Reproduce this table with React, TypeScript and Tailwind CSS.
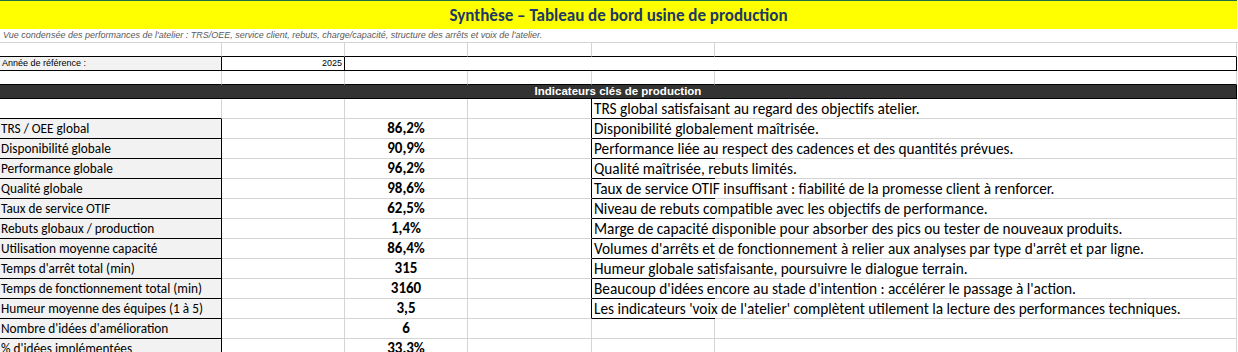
const rows = [
  { label: '', value: '', note: 'TRS global satisfaisant au regard des objectifs atelier.' },
  { label: 'TRS / OEE global', value: '86,2%', note: 'Disponibilité globalement maîtrisée.' },
  { label: 'Disponibilité globale', value: '90,9%', note: 'Performance liée au respect des cadences et des quantités prévues.' },
  { label: 'Performance globale', value: '96,2%', note: 'Qualité maîtrisée, rebuts limités.' },
  { label: 'Qualité globale', value: '98,6%', note: 'Taux de service OTIF insuffisant : fiabilité de la promesse client à renforcer.' },
  { label: 'Taux de service OTIF', value: '62,5%', note: 'Niveau de rebuts compatible avec les objectifs de performance.' },
  { label: 'Rebuts globaux / production', value: '1,4%', note: 'Marge de capacité disponible pour absorber des pics ou tester de nouveaux produits.' },
  { label: 'Utilisation moyenne capacité', value: '86,4%', note: "Volumes d'arrêts et de fonctionnement à relier aux analyses par type d'arrêt et par ligne." },
  { label: "Temps d'arrêt total (min)", value: '315', note: 'Humeur globale satisfaisante, poursuivre le dialogue terrain.' },
  { label: 'Temps de fonctionnement total (min)', value: '3160', note: "Beaucoup d'idées encore au stade d'intention : accélérer le passage à l'action." },
  { label: 'Humeur moyenne des équipes (1 à 5)', value: '3,5', note: "Les indicateurs 'voix de l'atelier' complètent utilement la lecture des performances techniques." },
  { label: "Nombre d'idées d'amélioration", value: '6', note: '' },
  { label: "% d'idées implémentées", value: '33,3%', note: '' },
];

const cell = 'border-r border-b border-[#d4d4d4]';

function BlankRow({ bottomBlack = false }: { bottomBlack?: boolean }) {
  const b = bottomBlack ? 'border-b-black' : '';
  return (
    <div className="grid grid-cols-[222px_123px_123px_124px_123px_522px] h-[14px]">
      {[0, 1, 2, 3, 4, 5].map(i => (
        <div key={i} className={`${cell} ${b}`} />
      ))}
    </div>
  );
}

export default function App() {
  return (
    <div className="w-[1238px] h-[352px] overflow-hidden bg-white font-['Carlito','Lato',sans-serif] text-black">
      {/* Titre */}
      <div className="w-[1237px] h-[29px] border-t border-[#1e7145] bg-[#ffff00] flex items-center justify-center">
        <span className="text-[17px] font-bold text-[#203864] leading-none">
          Synthèse – Tableau de bord usine de production
        </span>
      </div>
      <div className="w-[1238px] h-[14px] border-b border-[#d4d4d4] flex items-center px-[3px]">
        <span className="font-['Liberation_Sans',sans-serif] italic text-[9px] text-[#595959] leading-none">
          Vue condensée des performances de l'atelier : TRS/OEE, service client, rebuts, charge/capacité, structure des arrêts et voix de l'atelier.
        </span>
      </div>

      <BlankRow bottomBlack />

      {/* Année */}
      <div className="grid grid-cols-[222px_123px_892px] h-[14px] font-['Liberation_Sans',sans-serif] text-[9px] leading-none">
        <div className="border-r border-b border-black bg-[#f2f2f2] flex items-center px-[2px]">Année de référence :</div>
        <div className="border-r border-b border-black flex items-center justify-end px-[2px]">2025</div>
        <div className="border-r border-b border-black" />
      </div>

      <BlankRow bottomBlack />

      {/* En-tête */}
      <div className="w-[1237px] h-[14px] bg-[#333333] border-r border-b border-black flex items-center justify-center">
        <span className="font-['Liberation_Sans',sans-serif] font-bold text-[11.5px] text-white leading-none">
          Indicateurs clés de production
        </span>
      </div>

      {rows.map((r, i) => {
        const isLabel = r.label !== '';
        const hasNote = r.note !== '';
        const nextIsLabel = i + 1 < rows.length;
        return (
          <div key={i} className="grid grid-cols-[222px_123px_123px_124px_123px_522px] h-[20px] leading-none">
            <div
              className={`border-r border-b flex items-center whitespace-nowrap pl-[1px] text-[13.3px] ${
                isLabel || nextIsLabel ? 'border-b-black' : 'border-b-[#d4d4d4]'
              } ${isLabel ? 'bg-[#f2f2f2] border-r-black' : 'border-r-[#d4d4d4]'}`}
            >
              {r.label}
            </div>
            <div className={cell} />
            <div className={`${cell} flex items-center justify-center font-bold text-[15px]`}>{r.value}</div>
            <div className={`border-r border-b border-[#d4d4d4] ${hasNote ? 'border-r-black' : ''}`} />
            <div
              className={`relative border-b flex items-center pl-[2px] whitespace-nowrap text-[15.3px] ${
                hasNote ? 'border-b-black' : 'border-b-[#d4d4d4] border-r border-r-[#d4d4d4]'
              }`}
            >
              <span className="relative z-10">{r.note}</span>
            </div>
            <div className={cell} />
          </div>
        );
      })}
    </div>
  );
}
